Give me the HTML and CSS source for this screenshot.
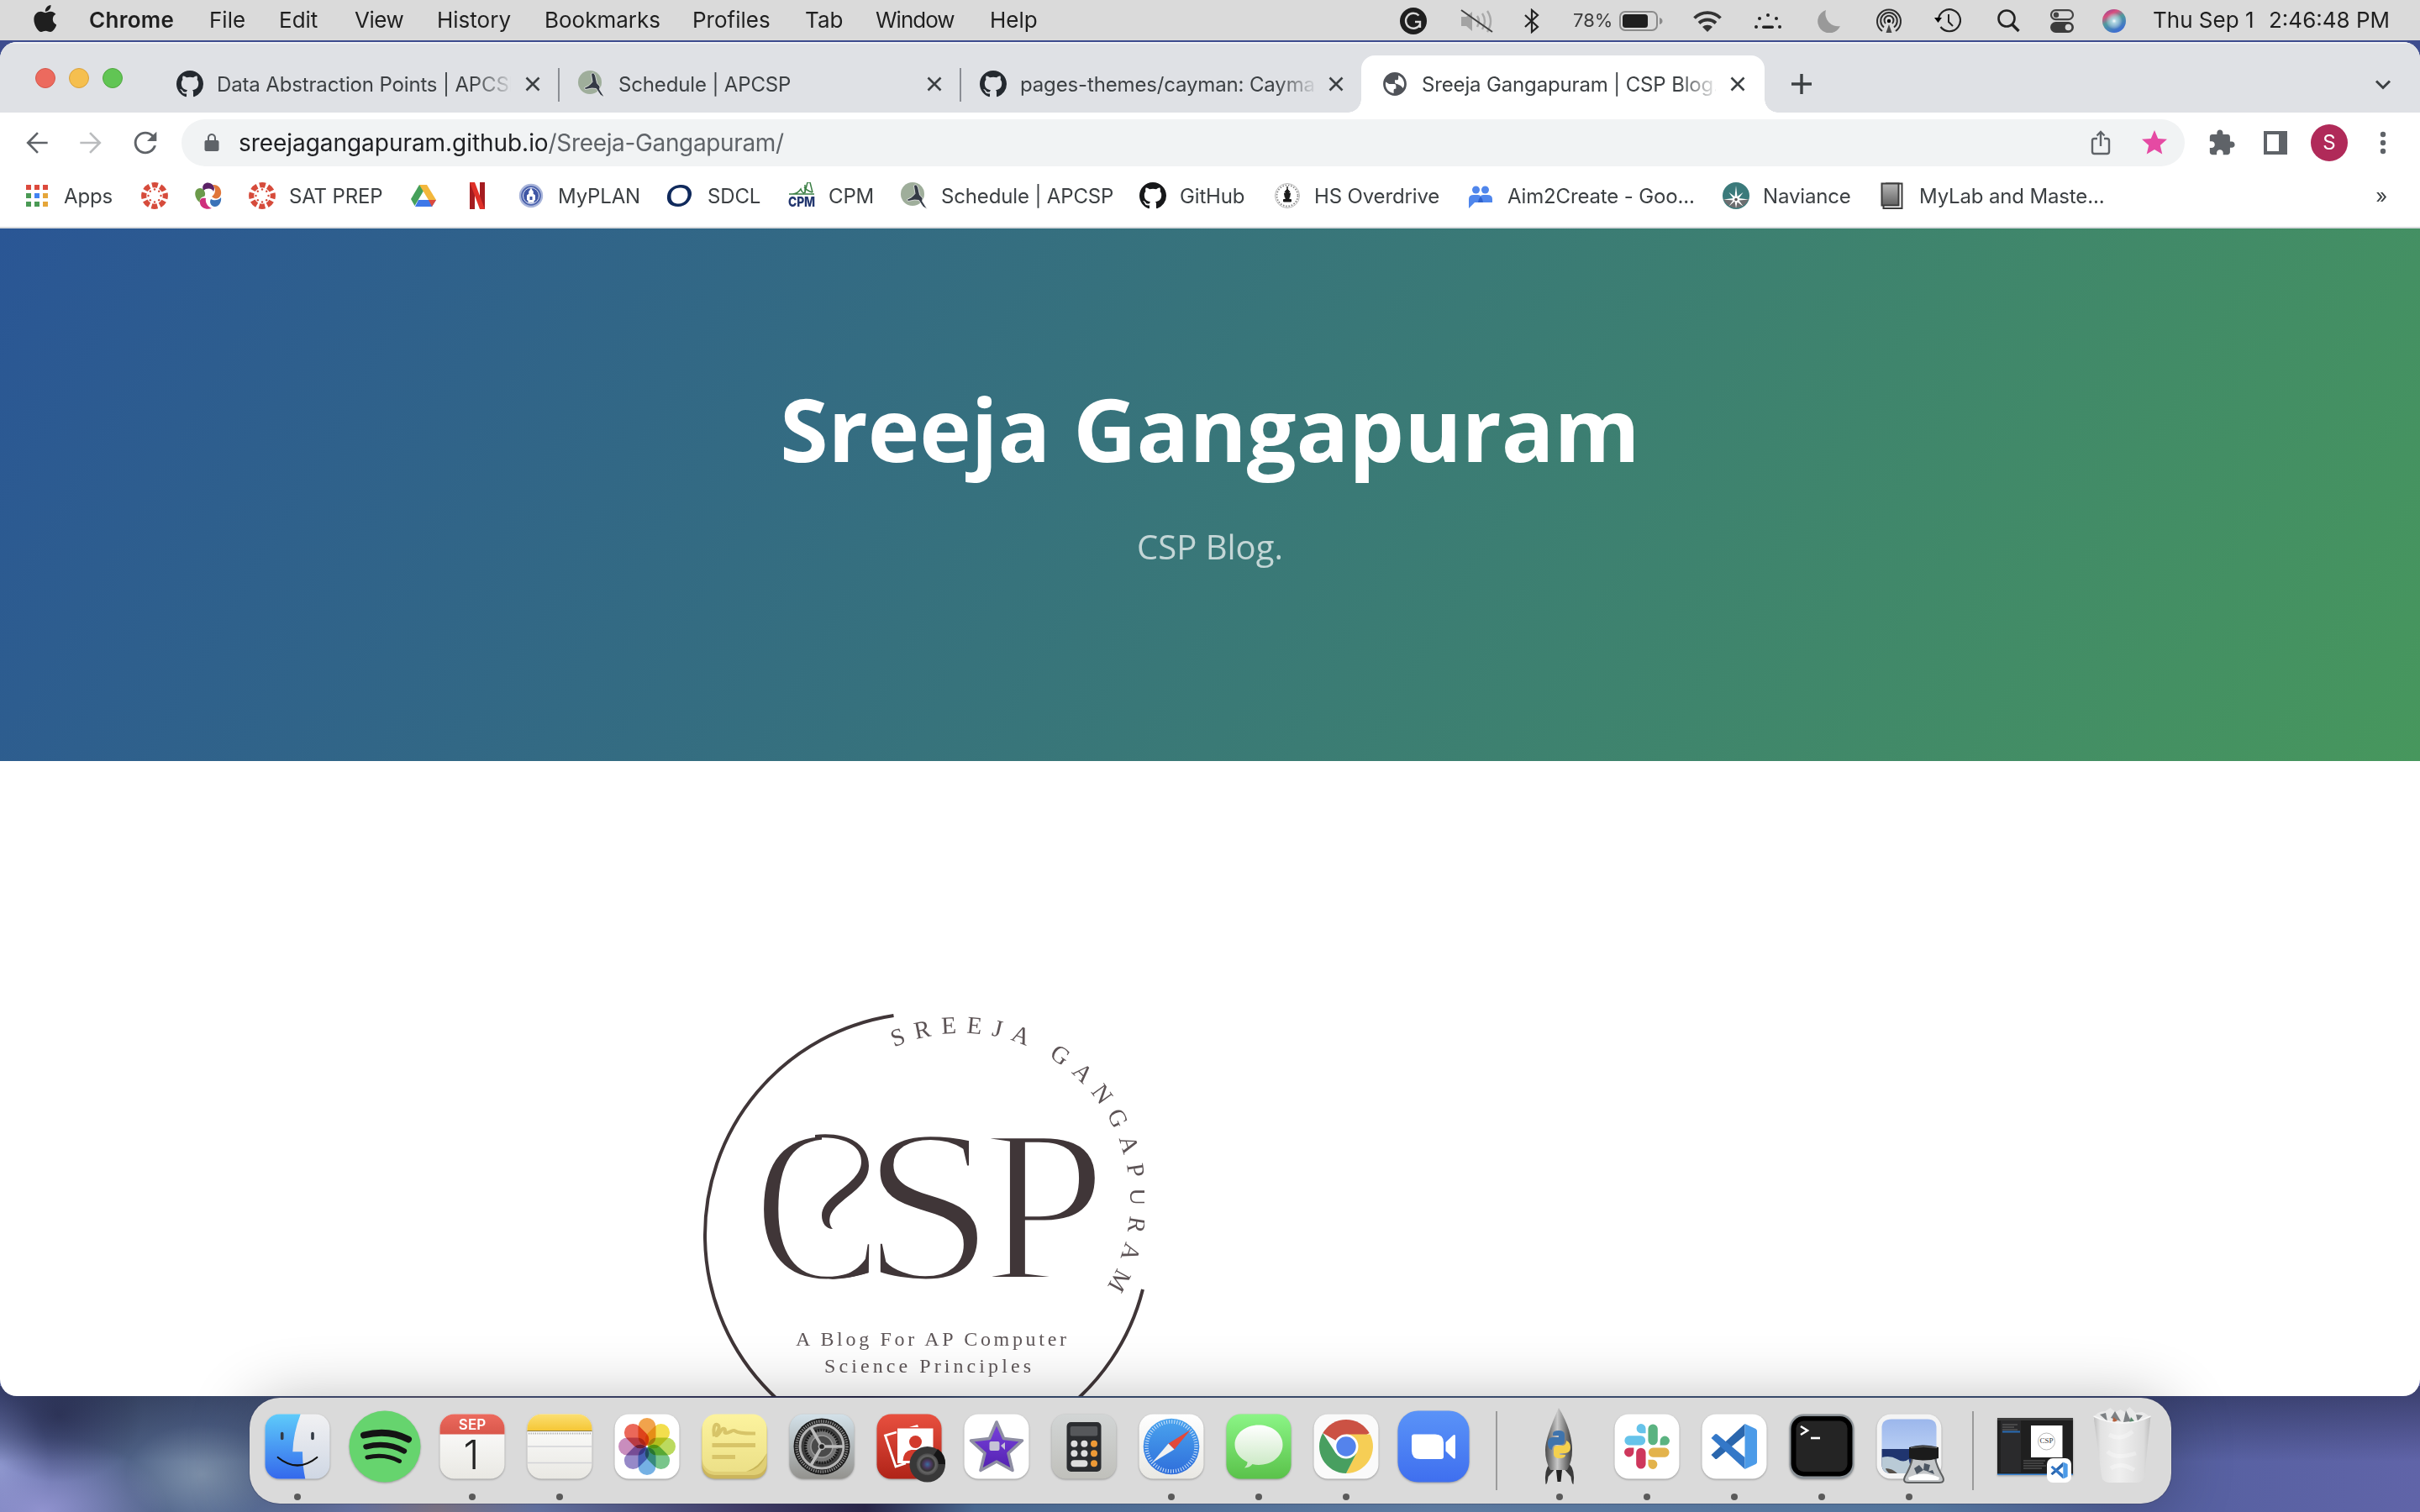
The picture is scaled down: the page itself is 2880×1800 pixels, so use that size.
FILE: index.html
```
<!DOCTYPE html>
<html lang="en">
<head>
<meta charset="utf-8">
<title>Sreeja Gangapuram | CSP Blog.</title>
<link rel="stylesheet" href="styles.css">
</head>
<body>
<svg class="defs" aria-hidden="true">
  <defs>
    <linearGradient id="gFinder" x2="0" y2="1"><stop offset="0" stop-color="#5ecbfa"/><stop offset="1" stop-color="#3468ec"/></linearGradient>
    <linearGradient id="gFace" x2="0" y2="1"><stop offset="0" stop-color="#f1f1f3"/><stop offset="1" stop-color="#cfd7e4"/></linearGradient>
    <linearGradient id="gPaper" x2="0" y2="1"><stop offset="0" stop-color="#fff"/><stop offset="1" stop-color="#e9e8e3"/></linearGradient>
    <linearGradient id="gRed" x2="0" y2="1"><stop offset="0" stop-color="#ec6a5e"/><stop offset="1" stop-color="#d9574b"/></linearGradient>
    <linearGradient id="gBooth" x2="0" y2="1"><stop offset="0" stop-color="#e8503f"/><stop offset="1" stop-color="#b02318"/></linearGradient>
    <linearGradient id="gYellow" x2="0" y2="1"><stop offset="0" stop-color="#fbdf72"/><stop offset="1" stop-color="#f5c634"/></linearGradient>
    <linearGradient id="gSticky" x2="0" y2="1"><stop offset="0" stop-color="#fcf39e"/><stop offset="1" stop-color="#ece088"/></linearGradient>
    <linearGradient id="gSettings" x2="0" y2="1"><stop offset="0" stop-color="#d3e1e9"/><stop offset="1" stop-color="#93928e"/></linearGradient>
    <linearGradient id="gStar" x2="0" y2="1"><stop offset="0" stop-color="#7a43dd"/><stop offset="1" stop-color="#5220b0"/></linearGradient>
    <linearGradient id="gCalc" x2="0" y2="1"><stop offset="0" stop-color="#d2d5d5"/><stop offset="1" stop-color="#c0c0bb"/></linearGradient>
    <linearGradient id="gSafari" x2="0" y2="1"><stop offset="0" stop-color="#4aa4ee"/><stop offset="1" stop-color="#2f6edb"/></linearGradient>
    <linearGradient id="gMsg" x2="0" y2="1"><stop offset="0" stop-color="#8bf586"/><stop offset="1" stop-color="#5ac24a"/></linearGradient>
    <linearGradient id="gBubble" x2="0" y2="1"><stop offset="0" stop-color="#fff"/><stop offset="1" stop-color="#c9e8c2"/></linearGradient>
    <linearGradient id="gZoom" x2="0" y2="1"><stop offset="0" stop-color="#5a93f8"/><stop offset="1" stop-color="#3f6fef"/></linearGradient>
    <linearGradient id="gRocket" x2="1" y2="0"><stop offset="0" stop-color="#4a4a4a"/><stop offset=".45" stop-color="#c9c9c9"/><stop offset="1" stop-color="#3c3c3c"/></linearGradient>
    <linearGradient id="gSky" x2="0" y2="1"><stop offset="0" stop-color="#9cb7ec"/><stop offset="1" stop-color="#b7cdf3"/></linearGradient>
    <linearGradient id="gTrash" x2="1" y2="0"><stop offset="0" stop-color="#bdbdbd"/><stop offset=".12" stop-color="#e2e2e2"/><stop offset=".45" stop-color="#efefef"/><stop offset=".88" stop-color="#dcdcdc"/><stop offset="1" stop-color="#bcbcbc"/></linearGradient>
    <linearGradient id="gLab" x2="0" y2="1"><stop offset="0" stop-color="#b8b8b8"/><stop offset="1" stop-color="#626262"/></linearGradient>
    <radialGradient id="gLens"><stop offset="0" stop-color="#3c6ea0"/><stop offset=".35" stop-color="#4b3860"/><stop offset=".6" stop-color="#333"/><stop offset=".75" stop-color="#666"/><stop offset="1" stop-color="#4a4a4a"/></radialGradient>
    <radialGradient id="gSiri"><stop offset="0" stop-color="#fff"/><stop offset=".3" stop-color="#bfe2ee" stop-opacity=".8"/><stop offset="1" stop-color="#fff" stop-opacity="0"/></radialGradient>
    <linearGradient id="gSiriBase" x1="0" y1="0" x2=".5" y2="1"><stop offset="0" stop-color="#7c3f98"/><stop offset=".3" stop-color="#d9507f"/><stop offset=".55" stop-color="#4f9a9d"/><stop offset="1" stop-color="#3f6fd0"/></linearGradient>
  </defs>
  <symbol id="github" viewBox="0 0 16 16"><path d="M8 0C3.58 0 0 3.58 0 8c0 3.54 2.29 6.53 5.47 7.59.4.07.55-.17.55-.38 0-.19-.01-.82-.01-1.49-2.01.37-2.53-.49-2.69-.94-.09-.23-.48-.94-.82-1.13-.28-.15-.68-.52-.01-.53.63-.01 1.08.58 1.23.82.72 1.21 1.87.87 2.33.66.07-.52.28-.87.51-1.07-1.78-.2-3.64-.89-3.64-3.95 0-.87.31-1.59.82-2.15-.08-.2-.36-1.02.08-2.12 0 0 .67-.21 2.2.82.64-.18 1.32-.27 2-.27s1.36.09 2 .27c1.53-1.04 2.2-.82 2.2-.82.44 1.1.16 1.92.08 2.12.51.56.82 1.27.82 2.15 0 3.07-1.87 3.75-3.65 3.95.29.25.54.73.54 1.48 0 1.07-.01 1.93-.01 2.2 0 .21.15.46.55.38A8.01 8.01 0 0016 8c0-4.42-3.58-8-8-8z"/></symbol>
  <symbol id="bird" viewBox="0 0 32 32"><circle cx="14" cy="14" r="14" fill="#9fae9b"/><path d="M15.500 4q3-3 5 2l2 9 3.500 4-.5 3.500L31.500 32l-5-3-5-7.500-5-.5-8 1.500-1-2q6-2 9.500-7z" fill="#343a45" stroke="#fff" stroke-width=".7"/></symbol>
  <symbol id="close" viewBox="0 0 20 20"><path d="M2.500 2.500l15 15m0-15l-15 15" stroke="#3c4043" stroke-width="2.600" fill="none"/></symbol>
  <symbol id="canvas" viewBox="0 0 32 32"><circle cx="16" cy="16" r="12.800" fill="none" stroke="#d64b3b" stroke-width="6.200" stroke-dasharray="7 3.050" stroke-dashoffset="3.500"/><g fill="#d64b3b"><circle cx="16" cy="8.500" r="1.200"/><circle cx="16" cy="23.500" r="1.200"/><circle cx="8.500" cy="16" r="1.200"/><circle cx="23.500" cy="16" r="1.200"/><circle cx="10.800" cy="10.800" r="1.200"/><circle cx="21.200" cy="10.800" r="1.200"/><circle cx="10.800" cy="21.200" r="1.200"/><circle cx="21.200" cy="21.200" r="1.200"/></g></symbol>
  <symbol id="vscode" viewBox="0 0 56 54"><path d="M1 37l4.500 4.500q1 1 2.500 0L41 14V0z" fill="#2a66ad"/><path d="M1 17l4.500-4.500q1-1 2.500 0L41 40v14z" fill="#3478c8"/><path d="M41 0l13 6q1.500 1 1.500 2.500v37q0 1.500-1.500 2.500l-13 6z" fill="#4c9be8"/></symbol>
</svg>

<header class="menubar">
  <nav class="menus">
    <svg class="apple" viewBox="0 32 376 448"><path d="M318.700 268.700c-.2-36.700 16.400-64.400 50-84.800-18.800-26.900-47.200-41.700-84.700-44.600-35.500-2.800-74.300 20.700-88.500 20.700-15 0-49.400-19.700-76.400-19.700C63.300 141.200 4 184.800 4 273.500q0 39.300 14.400 81.200c12.800 36.700 59 126.700 107.200 125.200 25.200-.6 43-17.900 75.800-17.900 31.800 0 48.300 17.900 76.400 17.900 48.600-.7 90.400-82.500 102.600-119.300-65.200-30.700-61.700-90-61.700-91.900zm-56.600-164.200c27.300-32.400 24.800-61.900 24-72.500-24.100 1.400-52 16.400-67.900 34.900-17.500 19.800-27.800 44.300-25.600 71.900 26.100 2 49.900-11.400 69.500-34.300z"/></svg>
    <b>Chrome</b><span>File</span><span>Edit</span><span class="snug">View</span><span>History</span><span>Bookmarks</span><span>Profiles</span><span>Tab</span><span class="tight">Window</span><span>Help</span>
  </nav>
  <div class="status">
    <svg width="32" height="32" viewBox="0 0 32 32"><circle cx="16" cy="16" r="16" fill="#1f1f1f"/><path d="M22.500 9.500A9 9 0 1 0 24 20v-3h-6m6 0v7" fill="none" stroke="#dadada" stroke-width="2.400"/></svg>
    <svg width="40" height="30" viewBox="0 0 40 30"><path d="M1 10h6l7-6v23l-7-6H1z" fill="#a3a3a3"/><path d="M20 9q4 6 0 13M26 6q6 9 0 19M32 3q8 12 0 25" fill="none" stroke="#a8a8a8" stroke-width="2.400"/><path d="M1 2l37 26" stroke="#3f3f3f" stroke-width="2"/></svg>
    <svg width="22" height="30" viewBox="0 0 22 30"><path d="M3 8l15 14-7 6V2l7 6L3 22" fill="none" stroke="#222" stroke-width="2.200"/></svg>
    <span class="pct">78%</span>
    <svg width="52" height="24" viewBox="0 0 52 24"><rect x="1" y="1" width="44" height="22" rx="6" fill="none" stroke="#8a8a8a" stroke-width="2"/><rect x="4" y="4" width="30" height="16" rx="3.500" fill="#1f1f1f"/><path d="M48 8q3.500 1 3.500 4t-3.500 4z" fill="#8a8a8a"/></svg>
    <svg width="36" height="26" viewBox="0 0 36 26"><g fill="none" stroke="#333" stroke-width="3.800"><path d="M2.500 9.500a22 22 0 0 1 31 0M8 15.500a14.500 14.500 0 0 1 20 0"/></g><path d="M12 20a9 9 0 0 1 12 0l-6 6z" fill="#333"/></svg>
    <svg width="36" height="20" viewBox="0 0 36 20" fill="#222"><circle cx="18" cy="3" r="2"/><circle cx="8" cy="7" r="2"/><circle cx="28" cy="7" r="2"/><circle cx="4" cy="17" r="2"/><circle cx="32" cy="17" r="2"/><rect x="11" y="15.500" width="14" height="3.400" rx="1.700"/></svg>
    <svg width="30" height="28" viewBox="0 0 30 28"><path d="M11 1a15 15 0 0 0 17 19A14 14 0 1 1 11 1z" fill="#999"/></svg>
    <svg width="32" height="30" viewBox="0 0 32 30"><g fill="none" stroke="#2c2c2c" stroke-width="2"><path d="M8 27a14 14 0 1 1 16 0M10 22.500a9.800 9.800 0 1 1 12 0M12 18a5.500 5.500 0 1 1 8 0"/></g><circle cx="16" cy="15" r="2.200"/><path d="M16 19l3.500 10h-7z" fill="#2c2c2c" opacity=".85"/></svg>
    <svg width="32" height="30" viewBox="0 0 32 30"><path d="M5 13A13 13 0 1 1 7.500 22" fill="none" stroke="#222" stroke-width="2.200"/><path d="M0 11h9l-4.500 6z"/><path d="M17 7v9l5 5" fill="none" stroke="#222" stroke-width="2"/></svg>
    <svg width="30" height="28" viewBox="0 0 30 28"><circle cx="12" cy="11" r="9.500" fill="none" stroke="#222" stroke-width="2.600"/><path d="M18.500 18l8 8" stroke="#222" stroke-width="3.400"/></svg>
    <svg width="30" height="28" viewBox="0 0 30 28"><rect x="2" y="1.200" width="26" height="11" rx="5.500" fill="none" stroke="#444" stroke-width="2.200"/><circle cx="8" cy="6.700" r="3.200" fill="#444"/><rect x="1" y="15" width="28" height="13" rx="6.500" fill="#3c3c3c"/><circle cx="22.500" cy="21.500" r="3.800" fill="#dadada"/></svg>
    <svg width="28" height="28" viewBox="0 0 28 28"><circle cx="14" cy="14" r="14" fill="url(#gSiriBase)"/><circle cx="14" cy="14" r="10" fill="url(#gSiri)"/></svg>
    <span>Thu Sep 1</span><span>2:46:48 PM</span>
  </div>
</header>

<main class="window">
  <div class="tabstrip">
    <div class="lights"><i class="red"></i><i class="amber"></i><i class="green"></i></div>
    <div class="tab"><svg class="fav" fill="#24292f"><use href="#github"/></svg><span>Data Abstraction Points | APCSP</span><svg class="x"><use href="#close"/></svg></div>
    <div class="tab"><svg class="fav"><use href="#bird"/></svg><span>Schedule | APCSP</span><svg class="x"><use href="#close"/></svg></div>
    <div class="tab last"><svg class="fav" fill="#24292f"><use href="#github"/></svg><span>pages-themes/cayman: Cayman</span><svg class="x"><use href="#close"/></svg></div>
    <div class="tab active"><svg class="fav" viewBox="0.500 0.500 23 23" fill="#505359"><path d="M12 2C6.480 2 2 6.480 2 12s4.480 10 10 10 10-4.480 10-10S17.520 2 12 2zm-1 17.930c-3.950-.49-7-3.850-7-7.930 0-.62.080-1.210.21-1.790L7 12h4.500q1.500 0 1.500 1.500V16q-2 0-2 1.500zM14 12q-2 0-2-2V8.500h2c1.100 0 1-1.500 1-2.500v-1.400c2.930 1.190 5 4.060 5 7.410 0 1.500-.4 2.500-1 3.500L17 13.500z"/></svg><span>Sreeja Gangapuram | CSP Blog.</span><svg class="x"><use href="#close"/></svg></div>
    <svg class="plus" viewBox="0 0 24 24"><path d="M12 0v24M0 12h24" stroke="#3c4043" stroke-width="3.400"/></svg>
    <svg class="chev" viewBox="0 0 20 12"><path d="M2 1.500l8 8 8-8" fill="none" stroke="#3c4043" stroke-width="3"/></svg>
  </div>

  <div class="toolbar">
    <svg width="38" height="38" viewBox="0 0 24 24" fill="#5f6368"><path d="M20 11.200H7.200l6-6.100L12 4l-8 8 8 8 1.200-1.100-6-6.100H20z"/></svg>
    <svg width="38" height="38" viewBox="0 0 24 24" fill="#babcbe"><path d="M4 11.200h12.800l-6-6.100L12 4l8 8-8 8-1.200-1.100 6-6.100H4z"/></svg>
    <svg width="40" height="40" viewBox="0 0 24 24" fill="#5f6368"><path d="M17.650 6.350C16.200 4.900 14.210 4 12 4c-4.420 0-7.990 3.580-7.990 8s3.570 8 7.990 8c3.730 0 6.840-2.550 7.730-6h-1.800c-.82 2.500-3.140 4.250-5.930 4.250-3.450 0-6.250-2.800-6.250-6.250s2.800-6.250 6.250-6.250c1.730 0 3.290.7 4.400 1.850L13.200 10.800H20V4z"/></svg>
    <div class="omnibox">
      <svg width="24" height="24" viewBox="0 0 24 24" fill="#5f6368"><path d="M18.500 9H17V6c0-2.760-2.240-5-5-5S7 3.240 7 6v3H5.500c-1.100 0-2 .9-2 2v9c0 1.100.9 2 2 2h13c1.100 0 2-.9 2-2v-9c0-1.100-.9-2-2-2zM9 6c0-1.660 1.340-3 3-3s3 1.340 3 3v3H9z"/></svg>
      <p><span>sreejagangapuram.github.io</span><span class="path">/Sreeja-Gangapuram/</span></p>
      <svg width="24" height="30" viewBox="0 0 24 30"><path d="M8 10H4.500Q2 10 2 12.500v13Q2 28 4.500 28h15q2.500 0 2.500-2.500v-13Q22 10 19.500 10H16M12 19V2M7.500 6.500L12 2l4.500 4.500" fill="none" stroke="#5f6368" stroke-width="2.400"/></svg>
      <svg class="star" width="36" height="36" viewBox="0 0 24 24" fill="#e54aa3"><path d="M12 17.270L18.180 21l-1.640-7.030L22 9.240l-7.190-.61L12 2 9.190 8.630 2 9.240l5.460 4.730L5.820 21z"/></svg>
    </div>
    <div class="tools">
      <svg width="34" height="34" viewBox="0 0 24 24" fill="#5f6368"><path d="M20.500 11H19V7c0-1.100-.9-2-2-2h-4V3.500C13 2.120 11.880 1 10.500 1S8 2.120 8 3.500V5H4c-1.100 0-1.990.9-1.990 2v3.800H3.500c1.490 0 2.700 1.210 2.700 2.700s-1.210 2.700-2.700 2.700H2V20c0 1.100.9 2 2 2h3.800v-1.500c0-1.490 1.210-2.700 2.700-2.700 1.490 0 2.700 1.210 2.700 2.700V22H17c1.100 0 2-.9 2-2v-4h1.500c1.380 0 2.500-1.120 2.500-2.500S21.880 11 20.500 11z"/></svg>
      <svg width="28" height="28" viewBox="0 0 28 28"><path d="M0 0h28v28H0zM4 4v20h14V4z" fill="#5f6368" fill-rule="evenodd"/></svg>
      <div class="avatar">S</div>
      <svg width="8" height="28" viewBox="0 0 8 28" fill="#5f6368"><circle cx="4" cy="4" r="3.200"/><circle cx="4" cy="14" r="3.200"/><circle cx="4" cy="24" r="3.200"/></svg>
    </div>
  </div>

  <div class="bookmarks">
    <div><svg viewBox="0 0 32 32"><g fill="#dc4a3d"><path d="M3 3h6v6H3zM13 3h6v6h-6zM23 3h6v6h-6z"/></g><path d="M3 13h6v6H3zM3 23h6v6H3zM13 23h6v6h-6z" fill="#4a9a55"/><path d="M13 13h6v6h-6z" fill="#4184f3"/><path d="M23 13h6v6h-6zM23 23h6v6h-6z" fill="#e5a63a"/></svg>Apps</div>
    <div><svg><use href="#canvas"/></svg></div>
    <div><svg viewBox="0 0 32 32"><path d="M10 10C7 3 13-1 18 1s6 6 4 10c-1-4-8-5-12-1z" fill="#5b2266"/><path d="M21 3c7-1 11 5 10 11s-7 7-11 3c4-2 6-9 1-14z" fill="#e0763a"/><path d="M31 18c1 6-3 12-8 11s-6-6-4-9c3 2 9 2 12-2z" fill="#3a72b8"/><path d="M20 31c-6 2-13 0-14-6s3-7 7-6c-1 5 2 10 7 12z" fill="#cf2f7c"/><path d="M6 24c-5-3-7-10-5-14s8-4 10 0 1 6 0 7c-3 0-6 3-5 7z" fill="#6b9a4a"/><circle cx="16" cy="15" r="3.500" fill="#fff"/></svg></div>
    <div><svg><use href="#canvas"/></svg>SAT PREP</div>
    <div><svg viewBox="0 0 32 32"><path d="M11 3h9l-5 9-9.500 16L1 20z" fill="#45a05a"/><path d="M11 3h9l11 18h-9z" fill="#f3b73c"/><path d="M10 21h21l-5 8H6z" fill="#3e78e8"/><path d="M22 21h9l-5 8z" fill="#dc4a3d"/></svg></div>
    <div><svg viewBox="0 0 32 32"><path d="M7 0h6v32H7zM19 0h6v32h-6z" fill="#a51c20"/><path d="M7 0h6l12 32h-6z" fill="#df3028"/></svg></div>
    <div><svg viewBox="0 0 32 32"><circle cx="16" cy="16" r="13" fill="#4c63ad" stroke="#a9b5da" stroke-width="2.400"/><circle cx="16" cy="16" r="9.500" fill="#3f56a5" stroke="#dfe4f3"/><path d="M16 6.500l1.500 3q2 1 1 4l2.500 2v5.500l-1.500 1v2.500h-7V22L11 21v-5.500l2.500-2q-1-3 1-4z" fill="#fff"/><path d="M14.500 17h3v4h-3z" fill="#3f56a5"/></svg>MyPLAN</div>
    <div class="sdcl"><svg viewBox="0 0 32 32"><path d="M17 3c9-1 15 5 14 12S24 29 15 29 1 24 2 16 9 4 17 3zm1 3.500C10 6.500 6.500 11 6.500 17s3.500 8.500 9.500 8.500S26.500 20 26.500 15 24 6.500 18 6.500z" fill="#102a5c" fill-rule="evenodd"/></svg>SDCL</div>
    <div><svg viewBox="0 0 32 32"><path d="M5 14q6 0 10-6 2 6 5 4l3-12 3 0 3 12M1 14h30M19 6q5 5 10 6M20 3v10" fill="none" stroke="#3b7f45" stroke-width="1.500"/><text class="cpm" x="16" y="29" text-anchor="middle" textLength="32" lengthAdjust="spacingAndGlyphs">CPM</text></svg>CPM</div>
    <div><svg><use href="#bird"/></svg>Schedule | APCSP</div>
    <div><svg fill="#17181a"><use href="#github"/></svg>GitHub</div>
    <div><svg viewBox="0 0 32 32"><circle cx="16" cy="16" r="14.500" fill="#fff" stroke="#b5b5b5"/><circle cx="16" cy="16" r="12.500" fill="none" stroke="#888" stroke-width="1.800" stroke-dasharray="1.600 1.700"/><path d="M16 5v3l3 3.500h-1.500V13h2l-.8 5h-.7v2.500h2.500V23h-9v-2.500H14V18h-.7l-.8-5h2v-1.500H13L16 8z" fill="#1b1b1b" stroke="#1b1b1b"/></svg>HS Overdrive</div>
    <div><svg viewBox="0 0 32 32" fill="#4f86ec"><circle cx="10.500" cy="9" r="4.500"/><circle cx="21.500" cy="9" r="4.500"/><path d="M2 31V20q0-5 6-5h4.500q3.500 0 3.500 2 0-2 3.500-2H24q6 0 6 5v4H9z"/><path d="M16 17q3 3 3 7h-6q0-4 3-7z" fill="#2f62cf"/></svg>Aim2Create - Goo...</div>
    <div><svg viewBox="0 0 32 32"><circle cx="16" cy="16" r="16" fill="#3b7a7b"/><path d="M1 20h30a16 16 0 0 1-30 0z" fill="#6d6e70"/><path d="M16 4l1.500 13 7-5-5 7 11.500 1.500-11.500 1 5 7-7-5L16 31l-1.500-8.500-7 6 5-7L1 20.500 12.500 19l-5-7 7 5z" fill="#fff"/><circle cx="16" cy="20.500" r="1.800" fill="#555"/></svg>Naviance</div>
    <div><svg viewBox="0 0 32 32"><path d="M8 1.500h19.500V31H5.500V28" fill="#fff" stroke="#3c3c3c" stroke-width="2"/><rect x="3.500" y="1.500" width="20" height="26" fill="url(#gLab)" stroke="#3c3c3c" stroke-width="2"/></svg>MyLab and Maste...</div>
    <div class="more">»</div>
  </div>

  <section class="hero">
    <h1>Sreeja Gangapuram</h1>
    <p>CSP Blog.</p>
  </section>

  <article class="content">
    <svg class="logo" viewBox="820 906 542 756">
      <defs>
        <path id="ring" d="M1060.500 1248.700A200 200 0 0 1 1245 1603.200"/>
        <clipPath id="cclip"><path d="M890 1330h88v110h70v100H890z"/></clipPath>
      </defs>
      <path d="M1063.500 1209A264.500 264.500 0 1 0 1360 1535" fill="none" stroke="#403638" stroke-width="4"/>
      <text class="ringtext"><textPath href="#ring" startOffset="4">SREEJA GANGAPURAM</textPath></text>
      <g class="mono">
        <g clip-path="url(#cclip)"><text transform="translate(896.500 1523.500) scale(.9 1.025)">C</text></g>
        <text transform="translate(1024.300 1523.500) scale(1.127 1.025)">S</text>
        <text transform="translate(1168 1523.500) scale(1.048 1.025)">P</text>
        <path d="M970 1351C1005 1347 1034 1360 1034 1388C1034 1415 1000 1425 989 1445C986 1452 987 1459 991 1463C983 1463 978 1456 978 1447C978 1422 1025 1410 1025 1383C1025 1364 1005 1352 970 1354.500Z"/>
        <path d="M1033.500 1493v22q-25 8-48 8 34-4 48-30z"/>
      </g>
      <g class="tagline"><text x="947" y="1602" textLength="322">A Blog For AP Computer</text><text x="981" y="1634" textLength="246">Science Principles</text></g>
    </svg>
  </article>
</main>

<footer class="dock">
  <svg class="app" viewBox="0 0 104 126"><rect x="13.500" y="19.500" width="77" height="77" rx="17" fill="url(#gFace)"/><path d="M30.500 19.500H55.700Q47 42 46.300 64.300H58Q58 82 61.300 96.500H30.500a17 17 0 0 1-17-17v-43a17 17 0 0 1 17-17z" fill="url(#gFinder)"/><path d="M33.700 42.500v6M70 42.500v6" stroke="#333a44" stroke-width="3.600" stroke-linecap="round"/><path d="M28.700 71Q52 90 75.300 71" fill="none" stroke="#111" stroke-width="2.200" stroke-linecap="round"/><circle class="dot" cx="52" cy="118" r="4"/></svg>
  <svg class="app" viewBox="0 0 104 126"><circle cx="52" cy="58" r="42.500" fill="#66d46e"/><g fill="none" stroke="#141414" stroke-linecap="round"><path d="M27 44.500Q56 37 80 49.500" stroke-width="8"/><path d="M29.500 58.300Q55 52 75 63.500" stroke-width="6.400"/><path d="M31 71Q52 66 69.500 75.500" stroke-width="5"/></g></svg>
  <svg class="app" viewBox="0 0 104 126"><rect x="13.500" y="19.500" width="77" height="77" rx="17" fill="url(#gPaper)"/><path d="M13.500 43.500v-7a17 17 0 0 1 17-17h43a17 17 0 0 1 17 17v7z" fill="url(#gRed)"/><text class="sep" x="52" y="38" text-anchor="middle">SEP</text><text class="day" x="51" y="84.500" text-anchor="middle">1</text><circle class="dot" cx="52" cy="118" r="4"/></svg>
  <svg class="app" viewBox="0 0 104 126"><rect x="13.500" y="19.500" width="77" height="77" rx="17" fill="url(#gPaper)"/><path d="M13.500 39.500v-3a17 17 0 0 1 17-17h43a17 17 0 0 1 17 17v3z" fill="url(#gYellow)"/><path d="M13.500 39.500h77" stroke="#8c7a3c" stroke-width="1.200"/><path d="M15 42.500h75" stroke="#aaa" stroke-width="2" stroke-dasharray="1.200 1.400"/><path d="M13.500 58h77M13.500 77.500h77" stroke="#d2d2d6" stroke-width="1.400"/><circle class="dot" cx="52" cy="118" r="4"/></svg>
  <svg class="app" viewBox="0 0 104 126"><rect x="13.500" y="19.500" width="77" height="77" rx="17" fill="#fff"/><g class="petals"><rect x="41.500" y="24" width="21" height="33" rx="10.500" fill="#f09b3c"/><rect x="41.500" y="24" width="21" height="33" rx="10.500" fill="#f2dc3e" transform="rotate(45 52 58)"/><rect x="41.500" y="24" width="21" height="33" rx="10.500" fill="#b5d750" transform="rotate(90 52 58)"/><rect x="41.500" y="24" width="21" height="33" rx="10.500" fill="#6cc081" transform="rotate(135 52 58)"/><rect x="41.500" y="24" width="21" height="33" rx="10.500" fill="#69aae2" transform="rotate(180 52 58)"/><rect x="41.500" y="24" width="21" height="33" rx="10.500" fill="#8d7fc4" transform="rotate(225 52 58)"/><rect x="41.500" y="24" width="21" height="33" rx="10.500" fill="#c583b8" transform="rotate(270 52 58)"/><rect x="41.500" y="24" width="21" height="33" rx="10.500" fill="#ea5b4b" transform="rotate(315 52 58)"/></g></svg>
  <svg class="app" viewBox="0 0 104 126"><rect x="13.500" y="24" width="77" height="72.500" rx="15" fill="#cbb55c"/><rect x="13.500" y="22" width="77" height="70" rx="15" fill="#e0cf74"/><path d="M30.500 19.500h43a17 17 0 0 1 17 17V66Q84 86 66 88H30a16 16 0 0 1-16.500-16V36.500a17 17 0 0 1 17-17z" fill="url(#gSticky)"/><path d="M90.500 66Q84 86 66 88 82 82 90.500 66z" fill="#c9b658"/><path d="M28 46c-2-14 2-16 5-13s-5 13-2 12 6-10 9-8-2 5 2 5 8-4 10-3 3 4 25 3.500" fill="none" stroke="#d7c468" stroke-width="4"/><path d="M25.500 56.500H77M25.500 70.500H53" stroke="#d7c468" stroke-width="5"/></svg>
  <svg class="app" viewBox="0 0 104 126"><rect x="13.500" y="19.500" width="77" height="77" rx="17" fill="url(#gSettings)"/><circle cx="52" cy="58" r="33.500" fill="#1d1d1d"/><circle cx="52" cy="58" r="30" fill="none" stroke="#888" stroke-width="3.500" stroke-dasharray="1.400 1.400"/><circle cx="52" cy="58" r="26" fill="#3f3f3f" stroke="#b4b4b4" stroke-width="3"/><circle cx="52" cy="58" r="19.500" fill="#777" stroke="#1a1a1a" stroke-width="3.500" stroke-dasharray="2 1.200"/><circle cx="52" cy="58" r="13" fill="#4a4a4a" stroke="#999" stroke-width="1.500"/><path d="M52 58h26M52 58L39 35.500M52 58L39 80.500" stroke="#bcbcbc" stroke-width="3.500"/><circle cx="52" cy="58" r="3.600" fill="#222" stroke="#bbb" stroke-width="1.500"/></svg>
  <svg class="app" viewBox="0 0 104 126"><rect x="13.500" y="19.500" width="77" height="77" rx="17" fill="url(#gBooth)"/><path d="M37 41l-13.500 4 12.500 37 12-4" fill="none" stroke="#fff" stroke-width="2.800"/><path d="M52 35l10-3 1 3z" fill="#fff"/><rect x="38" y="36.500" width="42.500" height="41.500" fill="#fff"/><circle cx="59.500" cy="52.500" r="7.500" fill="#d23a2c"/><path d="M44.500 75q1-12 10-13h10q9 1 10 13z" fill="#d23a2c"/><circle cx="73.700" cy="79.300" r="21.300" fill="#383838"/><path d="M74 79L86 61a21 21 0 0 1 9 18z" fill="#161616"/><circle cx="73.700" cy="79.300" r="13" fill="url(#gLens)"/></svg>
  <svg class="app" viewBox="0 0 104 126"><rect x="13.500" y="19.500" width="77" height="77" rx="17" fill="#fff"/><path d="M52 29l8.500 19.500 22 2.500-16.500 15 5 20.500L52 76 33 86.500l5-20.500L21.500 51l22-2.500z" fill="url(#gStar)" stroke="#8f8fa3" stroke-width="3.600" stroke-linejoin="round"/><rect x="43.500" y="52" width="12" height="11" rx="2" fill="#c6c3d6"/><path d="M57 57l5-4v9z" fill="#c6c3d6"/></svg>
  <svg class="app" viewBox="0 0 104 126"><rect x="13.500" y="19.500" width="77" height="77" rx="17" fill="url(#gCalc)"/><rect x="31.500" y="29" width="41" height="59" rx="5" fill="#2b2d30"/><rect x="35.700" y="34" width="32.500" height="11.500" rx="2" fill="#56585b"/><g fill="#dedede"><circle cx="40.400" cy="54.700" r="4"/><circle cx="52.400" cy="54.700" r="4"/><circle cx="40.400" cy="66.300" r="4"/><circle cx="52.400" cy="66.300" r="4"/><rect x="36.400" y="74.300" width="20" height="8" rx="4"/></g><g fill="#ee9a36"><circle cx="64" cy="54.700" r="4"/><circle cx="64" cy="66.300" r="4"/><circle cx="64" cy="78.300" r="4"/></g></svg>
  <svg class="app" viewBox="0 0 104 126"><rect x="13.500" y="19.500" width="77" height="77" rx="17" fill="url(#gPaper)"/><circle cx="52" cy="58" r="33.300" fill="url(#gSafari)"/><circle cx="52" cy="58" r="29.500" fill="none" stroke="#cfe3f8" stroke-width="4.500" stroke-dasharray="1 2.090"/><path d="M75 38L55.500 61.500 48.500 54.500z" fill="#e2493b"/><path d="M29 77.500L48.500 54.500l7 7z" fill="#f1f1f1"/><circle class="dot" cx="52" cy="118" r="4"/></svg>
  <svg class="app" viewBox="0 0 104 126"><rect x="13.500" y="19.500" width="77" height="77" rx="17" fill="url(#gMsg)"/><path d="M52 32.500c16 0 28.500 10 28.500 23.500S68 80 52 80q-4 0-7.500-1-3 4-9.500 4.500 4-3.500 3.500-7C29.500 72 23.500 65 23.500 56 23.500 42.500 36 32.500 52 32.500z" fill="url(#gBubble)"/><circle class="dot" cx="52" cy="118" r="4"/></svg>
  <svg class="app" viewBox="0 0 104 126"><rect x="13.500" y="19.500" width="77" height="77" rx="17" fill="#fafafa"/><path d="M52 58L24.300 42A32 32 0 0 1 79.700 42z" fill="#cb5244"/><path d="M52 43.500H80.500A32 32 0 0 1 52 90L64.500 65z" fill="#f6ce55"/><path d="M24.300 42A32 32 0 0 0 52 90L64.500 65.500 52 72 39.500 65.500z" fill="#489f60"/><circle cx="52" cy="58" r="14.500" fill="#fff"/><circle cx="52" cy="58" r="11.700" fill="#5483ec"/><circle class="dot" cx="52" cy="118" r="4"/></svg>
  <svg class="app" viewBox="0 0 104 126"><rect x="9.500" y="15.500" width="85" height="85" rx="24" fill="url(#gZoom)"/><path d="M29 43.500H54q10 0 10 10V70q0 3-3 3H36q-10 0-10-10V46.500q0-3 3-3zM66.500 53l9-8.500q2.500-1.500 2.500 1V71q0 2.500-2.500 1l-9-8.500z" fill="#fff"/></svg>
  <div class="rule"></div>
  <svg class="app" viewBox="0 0 104 126"><path d="M41 78q-8 8-5.500 25 2 0 3-9l7-8h13l7 8q1 9 3 9 2.500-17-5.500-25z" fill="#3a3a3a"/><path d="M51 12C62 30 67 48 67 62q0 14-6 24H41Q35 76 35 62 35 48 51 12z" fill="url(#gRocket)"/><path d="M48 86h7l-1.500 14h-4z" fill="#222"/><path d="M51 39q7 0 7 5v8q0 4-5 4h-6q-4 1-4 6-5-1-5-8t6-7h7v-2h-7v-2q0-4 7-4z" fill="#3f74ad"/><path d="M52 72q-7 0-7-5v-6q0-4 5-4h6q4-1 4-6 5 2 5 8t-6 7h-7v2h7q0 4-7 4z" fill="#f4d04e"/><circle class="dot" cx="52" cy="118" r="4"/></svg>
  <svg class="app" viewBox="0 0 104 126"><rect x="13.500" y="19.500" width="77" height="77" rx="17" fill="#fff"/><g transform="translate(25 31) scale(2.250)"><g fill="#ce375c"><path d="M5.042 15.165a2.528 2.528 0 0 1-5.042 0 2.527 2.527 0 0 1 2.522-2.520h2.520zM6.313 15.165a2.527 2.527 0 0 1 5.042 0v6.313a2.528 2.528 0 0 1-5.042 0z"/></g><g fill="#66c3ea" transform="rotate(90 12 12)"><path d="M5.042 15.165a2.528 2.528 0 0 1-5.042 0 2.527 2.527 0 0 1 2.522-2.520h2.520zM6.313 15.165a2.527 2.527 0 0 1 5.042 0v6.313a2.528 2.528 0 0 1-5.042 0z"/></g><g fill="#5bb381" transform="rotate(180 12 12)"><path d="M5.042 15.165a2.528 2.528 0 0 1-5.042 0 2.527 2.527 0 0 1 2.522-2.520h2.520zM6.313 15.165a2.527 2.527 0 0 1 5.042 0v6.313a2.528 2.528 0 0 1-5.042 0z"/></g><g fill="#e3b34c" transform="rotate(270 12 12)"><path d="M5.042 15.165a2.528 2.528 0 0 1-5.042 0 2.527 2.527 0 0 1 2.522-2.520h2.520zM6.313 15.165a2.527 2.527 0 0 1 5.042 0v6.313a2.528 2.528 0 0 1-5.042 0z"/></g></g><circle class="dot" cx="52" cy="118" r="4"/></svg>
  <svg class="app" viewBox="0 0 104 126"><rect x="13.500" y="19.500" width="77" height="77" rx="17" fill="#fff"/><use href="#vscode" x="23.500" y="31" width="56" height="54"/><circle class="dot" cx="52" cy="118" r="4"/></svg>
  <svg class="app" viewBox="0 0 104 126"><rect x="13.500" y="19.500" width="77" height="77" rx="17" fill="#8d9499"/><rect x="15.500" y="22" width="73" height="71.500" rx="15" fill="#000"/><rect x="21.500" y="27.500" width="61" height="60.500" rx="9" fill="#242424"/><path d="M27 34l8 5-8 5" fill="none" stroke="#fff" stroke-width="2.600"/><path d="M39 48h11" stroke="#fff" stroke-width="2.600"/><circle class="dot" cx="52" cy="118" r="4"/></svg>
  <svg class="app" viewBox="0 0 104 126"><rect x="13.500" y="19.500" width="77" height="77" rx="17" fill="#f4f4f4"/><path d="M31 25.500h43q10.500 0 10.500 10.500V61H19.500V36q0-10.500 11.500-10.500z" fill="url(#gSky)"/><path d="M19.500 61h65v29H31q-11.500 0-11.500-11z" fill="#20356f"/><path d="M19.500 71q10-3 18 2t14 0l4 17H31q-11.500 0-11.500-11z" fill="#b9cad6"/><path d="M24 84q8 0 14 6h-9q-4-2-5-6z" fill="#56504a"/><path d="M56 72h27q2 10 9 22 3 7-4 7H51q-7 0-4-7 7-12 9-22z" fill="#c3c6c8" stroke="#5d5f60" stroke-width="2"/><path d="M58 84l6-4 5 6-8 5zM70 78l7 2-2 8-6-2zM74 88l6-2 2 5z" fill="#4c5662"/><path d="M51 95q18-9 37 0l-1 3H52z" fill="#fff"/><path d="M52 59q17.500-5 35 0v13q-17.500 5-35 0z" fill="#1b1b1b"/><path d="M54 59.500q15-3 31 0" stroke="#777" fill="none"/><circle class="dot" cx="52" cy="118" r="4"/></svg>
  <div class="rule"></div>
  <svg class="app" viewBox="0 0 104 126"><rect x="7" y="24" width="90" height="68" fill="#1f1f1f"/><path d="M7 24h90v3H7z" fill="#3b3b3b"/><path d="M11 27h24v62H11z" fill="#2a2a2c"/><path d="M13 32h18M13 35h14M13 38h18" stroke="#777" stroke-width=".8"/><path d="M13 40.500h21" stroke="#2a6db5" stroke-width="2"/><path d="M38 75h26M38 78h24M38 81h27M38 84h22" stroke="#777" stroke-width=".8"/><rect x="47" y="33" width="37.500" height="38" fill="#fff"/><circle cx="65.500" cy="52" r="10" fill="none" stroke="#999" stroke-width=".7"/><text class="mini" x="65.500" y="54" text-anchor="middle">CSP</text><path d="M7 90.500h90V92H7z" fill="#3b86d6"/><rect x="66" y="72" width="29" height="29" rx="7" fill="#fff"/><use href="#vscode" x="70" y="76.500" width="21" height="20"/></svg>
  <svg class="app" viewBox="0 0 104 126"><path d="M17.500 24q4-8 14-8l6-4 6 5 6-3 5 3 6-6 7 7 8-1q8 3 10 9-34 18-68 0z" fill="#e9e9e9"/><path d="M25 20l7-2 2 10zM38 24l5-8 7 12zM56 15l6 13-9 1zM68 20l8 1-6 7z" fill="#7c8083"/><path d="M41 23l5 4-6 3z" fill="#b35f3c"/><path d="M62 23l5 6-7 1z" fill="#56876a"/><path d="M17.500 22Q52 38 85.500 22L78 93q-1 8-10 8H37q-9 0-10-8z" fill="url(#gTrash)"/><path d="M17.500 22Q52 38 85.500 22" fill="none" stroke="#f8f8f8" stroke-width="1.600"/><path d="M36 44q14 8 28-4M34 64q10 10 34 2M38 84q12-8 28 2" fill="none" stroke="#fff" stroke-width="5" opacity=".3"/></svg>
</footer>
</body>
</html>
```
FILE: styles.css
```
* { box-sizing: border-box; margin: 0; padding: 0; }

body {
  width: 2880px;
  height: 1800px;
  overflow: hidden;
  display: flex;
  flex-direction: column;
  font-family: "Inter", "Liberation Sans", sans-serif;
  background:
    linear-gradient(#3d4c8e, #3d4c8e) 0 0 / 100% 200px no-repeat,
    linear-gradient(to bottom, rgba(20, 25, 50, .5), rgba(20, 25, 50, 0) 90px) 0 1650px / 100% 150px no-repeat,
    radial-gradient(ellipse 100px 80px at 70px 1685px, rgba(36, 38, 72, .6), transparent) no-repeat,
    radial-gradient(ellipse 150px 90px at 50px 1800px, #9193cf, transparent),
    radial-gradient(ellipse 60px 90px at 0 1750px, #8c98cc, transparent),
    radial-gradient(ellipse 90px 60px at 240px 1755px, #7c8fa8, transparent),
    linear-gradient(to right, #5c68a6 0, #4f6286 150px, #5a6f98 290px, #7280b5 420px, #8b8296 520px, #6f80b5 640px, #4a4678 880px, #2f2b52 1030px, #5377a6 1160px, #6a8cb8 1700px, #5f86b4 2300px, #5560a0 2560px, #6064a8 2880px);
}

.defs { position: absolute; width: 0; height: 0; }

/* System menu bar */
.menubar {
  flex: none;
  height: 48px;
  display: flex;
  background: #dadada;
  color: #1f1f1f;
  font-size: 26px;
  line-height: 48px;
}
.menus {
  width: 1666px;
  padding-left: 40px;
  display: grid;
  grid-template-columns: 66px 143px 83px 90px 98px 128px 176px 134px 84px 136px 1fr;
  align-items: center;
}
.menus b { font-weight: 600; letter-spacing: .3px; }
.menus .snug { letter-spacing: -.5px; }
.menus .tight { letter-spacing: -1px; }
.apple { width: 27px; height: 32px; fill: #1f1f1f; margin-top: -4px; }
.status {
  flex: 1;
  display: grid;
  grid-template-columns: 72px 74px 60px 55px 87px 72px 76px 70px 70px 74px 63px 63px 60px 138px 1fr;
  align-items: center;
  white-space: nowrap;
}
.status svg { margin-top: 2px; }
.pct { font-size: 22px; color: #3c3c3c; }

/* Browser window */
.window {
  flex: none;
  height: 1612px;
  margin-top: 2px;
  border-radius: 20px;
  overflow: hidden;
  background: #fff;
  display: flex;
  flex-direction: column;
}
.tabstrip {
  flex: none;
  height: 84px;
  display: flex;
  padding-left: 42px;
  padding-top: 16px;
  background: #dfe1e5;
  box-shadow: inset 0 2px 0 #f1f2f4;
}
.lights { width: 146px; display: flex; gap: 16px; padding-top: 15px; }
.lights i { width: 24px; height: 24px; border-radius: 50%; }
.lights .red { background: #ec6a5e; border: 1px solid #d5564b; }
.lights .amber { background: #f5bf4f; border: 1px solid #d9a13c; }
.lights .green { background: #61c554; border: 1px solid #50a73f; }
.tab {
  position: relative;
  width: 478px;
  padding: 0 22px;
  display: flex;
  align-items: center;
  font-size: 24px;
  letter-spacing: -.15px;
  color: #3c4043;
}
.tab:not(.last):not(.active)::after {
  content: "";
  position: absolute;
  right: 0;
  top: 15px;
  width: 2px;
  height: 40px;
  background: #8b8e94;
}
.tab .fav { width: 32px; height: 32px; flex: none; }
.tab .x { width: 20px; height: 20px; flex: none; }
.tab span {
  width: 350px;
  margin: 0 16px;
  overflow: hidden;
  white-space: nowrap;
  mask-image: linear-gradient(to right, #000 305px, transparent 355px);
}
.tab.active { background: #fff; border-radius: 16px 16px 0 0; width: 480px; margin-left: -2px; padding-left: 24px; }
.tab.active::before, .tab.active::after {
  content: "";
  position: absolute;
  bottom: 0;
  width: 16px;
  height: 16px;
}
.tab.active::before { left: -16px; background: radial-gradient(circle at 0 0, transparent 15.5px, #fff 16px); }
.tab.active::after { right: -16px; background: radial-gradient(circle at 100% 0, transparent 15.5px, #fff 16px); }
.plus { width: 24px; height: 24px; margin: 22px 0 0 32px; }
.chev { width: 20px; height: 12px; margin: 29px 34px 0 auto; }

.toolbar { flex: none; height: 72px; padding: 8px 40px 8px 25px; display: flex; align-items: center; }
.toolbar > svg { margin-right: 26px; }
.toolbar > svg:nth-child(3) { margin-right: 23px; }
.omnibox {
  width: 2384px;
  height: 56px;
  border-radius: 28px;
  background: #f1f3f4;
  display: flex;
  align-items: center;
  padding: 0 18px 0 24px;
  font-size: 28px;
  color: #202124;
}
.omnibox p { flex: 1; margin-left: 20px; letter-spacing: -.05px; }
.omnibox .path { color: #5f6368; letter-spacing: -.35px; }
.omnibox .star { margin-left: 34px; }
.tools {
  flex: 1;
  display: grid;
  grid-template-columns: 67px 56px 82px 1fr;
  align-items: center;
  padding-left: 27px;
}
.avatar {
  width: 44px;
  height: 44px;
  border-radius: 50%;
  background: #b02a59;
  color: #fff;
  font-size: 24px;
  line-height: 44px;
  text-align: center;
}

.bookmarks {
  flex: none;
  height: 66px;
  padding: 0 39px 10px 28px;
  border-bottom: 2px solid #dadcdf;
  display: grid;
  grid-template-columns: 140px 64px 64px 192px 64px 64px 176px 146px 134px 284px 160px 230px 304px 186px 1fr auto;
  align-items: center;
  font-size: 24px;
  letter-spacing: -.15px;
  color: #3c4043;
  white-space: nowrap;
}
.bookmarks div { display: flex; align-items: center; gap: 16px; }
.bookmarks .sdcl { gap: 18px; }
.bookmarks svg { width: 32px; height: 32px; flex: none; }
.cpm { font: 800 16px "Inter", sans-serif; fill: #22366f; }

/* Page */
.hero {
  flex: none;
  height: 634px;
  padding-top: 178px;
  text-align: center;
  font-family: "Open Sans", sans-serif;
  color: #fff;
  background: linear-gradient(120deg, #2a5695, #47975d);
}
.hero h1 { font-size: 104px; line-height: 120px; font-weight: 700; }
.hero p { margin-top: 51px; font-size: 40px; line-height: 60px; opacity: .7; }
.content { flex: 1; }
.logo { display: block; width: 542px; height: 756px; margin-left: 820px; }
.mono { fill: #403638; }
.mono text { font: 256px "Liberation Serif", serif; stroke: #fff; stroke-width: 7px; }
.ringtext { font: 29px "Liberation Serif", serif; letter-spacing: 11.7px; fill: #5c5355; }
.tagline { font: 24px "Liberation Serif", serif; fill: #5f5759; }

/* Dock */
.dock {
  flex: none;
  width: 2287px;
  height: 126px;
  margin: 2px 0 0 297px;
  padding-left: 5px;
  display: flex;
  border-radius: 36px;
  background: #dadada;
  box-shadow: 0 4px 80px -6px rgba(0, 0, 0, .32), 0 0 0 1px rgba(60, 66, 100, .35);
  position: relative;
}
.app { width: 104px; height: 126px; flex: none; }
.app > rect:first-child, .app > circle:first-child { filter: drop-shadow(0 1.500px 1px rgba(0, 0, 0, .3)); }
.dot { fill: #5a5a5a; }
.rule { width: 2px; height: 94px; margin: 16px 22px 0; background: #9b9b9b; flex: none; }
.rule:nth-last-child(3) { margin: 16px 21px 0 23px; }
.sep { font: 600 17px "Inter", sans-serif; fill: #fff; }
.day { font: 300 48px "Inter", sans-serif; fill: #222; }
.petals rect { mix-blend-mode: multiply; opacity: .92; }
.mini { font: 9px "Liberation Serif", serif; fill: #333; }
```
